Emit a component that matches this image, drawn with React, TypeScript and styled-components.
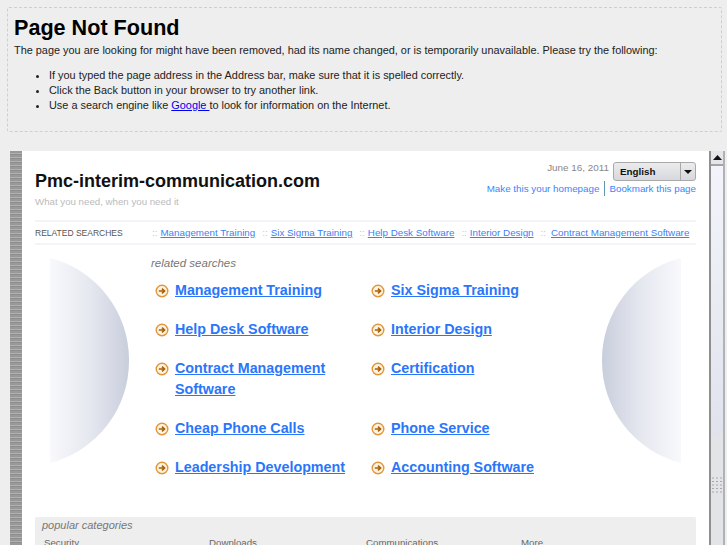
import React from "react";
import styled, { createGlobalStyle } from "styled-components";

const Global = createGlobalStyle`
  html, body { margin: 0; padding: 0; height: 545px; overflow: hidden; background: #eeeeee; }
  body { font-family: "Liberation Sans", Arial, sans-serif; color: #222; }
  a { color: #0000ee; }
`;
const Page = styled.div`
  height: 545px; box-sizing: border-box; padding: 7px 5px 0 7px; display: flex; flex-direction: column; overflow: hidden;
`;
const ErrorBox = styled.section`
  box-sizing: border-box; height: 125px; border: 1px dashed #cfcfcf; border-radius: 2px; padding: 6px 6px 0 6px; flex: none;
`;
const Title = styled.h1`
  margin: 0; font-size: 21.6px; line-height: 28px; font-weight: 700; color: #000;
`;
const Intro = styled.p`
  margin: 1px 0 0; font-size: 10.9px; line-height: 15px; color: #222; white-space: nowrap;
`;
const Tips = styled.ul`
  margin: 10px 0 0; padding: 0 0 0 35px; font-size: 10.9px; line-height: 15px; color: #222;
`;
const FrameRow = styled.div`
  margin: 19px -3px 0 3px; flex: 1; display: flex; min-height: 0;
`;
const Stripe = styled.div`
  width: 12px; flex: none;
  background: repeating-linear-gradient(to bottom, #999 0 2px, #b0b0b0 2px 3px, #8e8e8e 3px 4px);
`;
const Content = styled.main`
  flex: 1; background: #fff; padding: 0 13px; overflow: hidden; min-width: 0;
`;
const TopBar = styled.header`
  display: flex; justify-content: space-between; height: 69px;
`;
const Brand = styled.div`
  padding-top: 19px;
`;
const BrandName = styled.div`
  font-size: 18px; line-height: 23px; font-weight: 700; color: #111;
`;
const Tagline = styled.div`
  margin-top: 3px; font-size: 9.7px; line-height: 12px; color: #bbbbbb;
`;
const Tools = styled.div`
  padding-top: 11px; display: flex; flex-direction: column; align-items: flex-end;
`;
const DateRow = styled.div`
  display: flex; align-items: center; gap: 4px;
`;
const DateText = styled.span`
  font-size: 9.9px; color: #888; position: relative; top: -4px;
`;
const Select = styled.div`
  box-sizing: border-box; width: 83px; height: 19px; border: 1px solid #a9a9a9; border-radius: 3px; display: flex;
  background: linear-gradient(#ececec, #d6d8dd); font-size: 9.8px; font-weight: 700; color: #111;
`;
const SelectLabel = styled.span`
  flex: 1; padding-left: 6px; line-height: 18px;
`;
const SelectArrow = styled.span`
  width: 14px; border-left: 1px solid #a9a9a9; display: flex; align-items: center; justify-content: center;
`;
const ToolLinks = styled.div`
  display: flex; align-items: center;
`;
const ToolLink = styled.a`
  font-size: 9.8px; line-height: 14px; color: #3d85fb; text-decoration: none;
`;
const ToolSep = styled.span`
  width: 1px; height: 15px; background: #5f9aa8; margin: 0 4px 0 5px;
`;
const RelatedBar = styled.nav`
  box-sizing: border-box; height: 25px; border-top: 2px solid #f3f4f8; border-bottom: 2px solid #f3f4f8;
  display: flex; align-items: center;
`;
const RelatedLabel = styled.span`
  width: 117px; flex: none; font-size: 8.5px; line-height: 12px; color: #555;
`;
const Sep = styled.span<{ $wide?: boolean }>`
  color: #c4c8d4; margin-right: ${p => (p.$wide ? "5px" : "3px")};
`;
const RelatedItem = styled.span`
  white-space: nowrap; margin-right: 7px; font-size: 9.8px; line-height: 12px;
`;
const RelatedLink = styled.a`
  color: #3d7ff5;
`;
const Middle = styled.div`
  display: flex; height: 271px; padding-top: 11px; box-sizing: border-box;
`;
const Orb = styled.svg<{ $right?: boolean }>`
  flex: none; width: 79px; height: 205px;
  margin: 2px ${p => (p.$right ? "15px" : "0")} 0 ${p => (p.$right ? "0" : "15px")};
`;
const Center = styled.div`
  flex: 1; padding-left: 22px; min-width: 0;
`;
const Heading = styled.div`
  font-size: 11.5px; line-height: 14px; font-style: italic; color: #777;
`;
const LinkGrid = styled.div`
  margin-top: 10px; display: grid; grid-template-columns: 216px 200px;
`;
const LinkItem = styled.div`
  display: flex; align-items: flex-start; padding: 0 0 18px 4px;
`;
const Bullet = styled.svg`
  flex: none; width: 14px; height: 14px; margin: 4px 6px 0 0;
`;
const BigLink = styled.a`
  font-size: 14.3px; line-height: 21px; font-weight: 700; color: #2a76fa; width: 175px;
`;
const Popular = styled.section`
  height: 60px; margin-top: 1px; background: #eeeeee; border-radius: 2px; padding: 1px 7px 0;
`;
const PopularTitle = styled.div`
  font-size: 11px; line-height: 14px; font-style: italic; color: #777;
`;
const PopularCols = styled.div`
  margin-top: 5px; padding-left: 2px; display: grid; grid-template-columns: 165px 157px 155px 100px;
`;
const PopularCol = styled.div`
  font-size: 9.7px; line-height: 12px; color: #666;
`;
const Scrollbar = styled.div`
  width: 16px; flex: none; box-sizing: border-box; border-left: 2px solid #8f8f8f; border-right: 2px solid #b2b2b2;
  display: flex; flex-direction: column;
`;
const ScrollButton = styled.div`
  box-sizing: border-box; height: 15px; border-bottom: 2px solid #a4a4a4; background: #e4e6ea;
  display: flex; align-items: center; justify-content: center;
`;
const ScrollTrack = styled.div`
  flex: none; height: 269px; background: linear-gradient(#f3f4fb, #e0e3ec);
`;
const ScrollThumb = styled.div`
  flex: 1; background: #e2e4e7; display: flex; flex-direction: column; align-items: center;
  padding-top: 42px;
`;
const Grip = styled.svg`
  width: 10px; height: 17px;
`;

const left = ["Management Training", "Help Desk Software", "Contract Management Software", "Cheap Phone Calls", "Leadership Development"];
const right = ["Six Sigma Training", "Interior Design", "Certification", "Phone Service", "Accounting Software"];
const merged = left.flatMap((l, i) => [l, right[i]]);
const related = ["Management Training", "Six Sigma Training", "Help Desk Software", "Interior Design", "Contract Management Software"];

const Arrow = () => (
  <Bullet viewBox="0 0 14 14">
    <circle cx="7" cy="7" r="5.8" fill="#fdf3e2" stroke="#e2963a" strokeWidth="1.4" />
    <path d="M3.8 7h5.4M7 4.6 9.6 7 7 9.4" fill="none" stroke="#a86208" strokeWidth="1.6" />
  </Bullet>
);

export default function App() {
  return (
    <Page>
      <Global />
      <ErrorBox>
        <Title>Page Not Found</Title>
        <Intro>The page you are looking for might have been removed, had its name changed, or is temporarily unavailable. Please try the following:</Intro>
        <Tips>
          <li>If you typed the page address in the Address bar, make sure that it is spelled correctly.</li>
          <li>Click the Back button in your browser to try another link.</li>
          <li>Use a search engine like <a href="#">Google </a> to look for information on the Internet.</li>
        </Tips>
      </ErrorBox>
      <FrameRow>
        <Stripe />
        <Content>
          <TopBar>
            <Brand>
              <BrandName>Pmc-interim-communication.com</BrandName>
              <Tagline>What you need, when you need it</Tagline>
            </Brand>
            <Tools>
              <DateRow>
                <DateText>June 16, 2011</DateText>
                <Select>
                  <SelectLabel>English</SelectLabel>
                  <SelectArrow>
                    <svg width="8" height="4" viewBox="0 0 8 4"><path d="M0 0h8L4 4z" fill="#111" /></svg>
                  </SelectArrow>
                </Select>
              </DateRow>
              <ToolLinks>
                <ToolLink href="#">Make this your homepage</ToolLink>
                <ToolSep />
                <ToolLink href="#">Bookmark this page</ToolLink>
              </ToolLinks>
            </Tools>
          </TopBar>
          <RelatedBar>
            <RelatedLabel>RELATED SEARCHES</RelatedLabel>
            {related.map((r, i) => (
              <RelatedItem key={r}>
                <Sep $wide={i === 4}>::</Sep>
                <RelatedLink href="#">{r}</RelatedLink>
              </RelatedItem>
            ))}
          </RelatedBar>
          <Middle>
            <Orb viewBox="0 0 79 205">
              <defs>
                <linearGradient id="orbL" x1="0" x2="1" y1="0" y2="0">
                  <stop offset="0" stopColor="#f8f9fc" />
                  <stop offset="0.5" stopColor="#e6e8f0" />
                  <stop offset="1" stopColor="#c9cedc" />
                </linearGradient>
              </defs>
              <path d="M0 0A105 105 0 0 1 79 102.500A105 105 0 0 1 0 205z" fill="url(#orbL)" />
            </Orb>
            <Center>
              <Heading>related searches</Heading>
              <LinkGrid>
                {merged.map(m => (
                  <LinkItem key={m}>
                    <Arrow />
                    <BigLink href="#">{m}</BigLink>
                  </LinkItem>
                ))}
              </LinkGrid>
            </Center>
            <Orb $right viewBox="0 0 79 205">
              <defs>
                <linearGradient id="orbR" x1="1" x2="0" y1="0" y2="0">
                  <stop offset="0" stopColor="#f8f9fc" />
                  <stop offset="0.5" stopColor="#e6e8f0" />
                  <stop offset="1" stopColor="#c9cedc" />
                </linearGradient>
              </defs>
              <path d="M79 0A105 105 0 0 0 0 102.500A105 105 0 0 0 79 205z" fill="url(#orbR)" />
            </Orb>
          </Middle>
          <Popular>
            <PopularTitle>popular categories</PopularTitle>
            <PopularCols>
              {["Security", "Downloads", "Communications", "More"].map(c => (
                <PopularCol key={c}>{c}</PopularCol>
              ))}
            </PopularCols>
          </Popular>
        </Content>
        <Scrollbar>
          <ScrollButton>
            <svg width="9" height="5" viewBox="0 0 9 5"><path d="M0 5h9L4.500 0z" fill="#111" /></svg>
          </ScrollButton>
          <ScrollTrack />
          <ScrollThumb>
            <Grip viewBox="0 0 10 17">
              <path d="M0 1h10M0 4.500h10M0 8h10M0 11.500h10M0 15h10" stroke="#a8a8a8" strokeDasharray="2 2" strokeWidth="1.200" fill="none" />
            </Grip>
          </ScrollThumb>
        </Scrollbar>
      </FrameRow>
    </Page>
  );
}
